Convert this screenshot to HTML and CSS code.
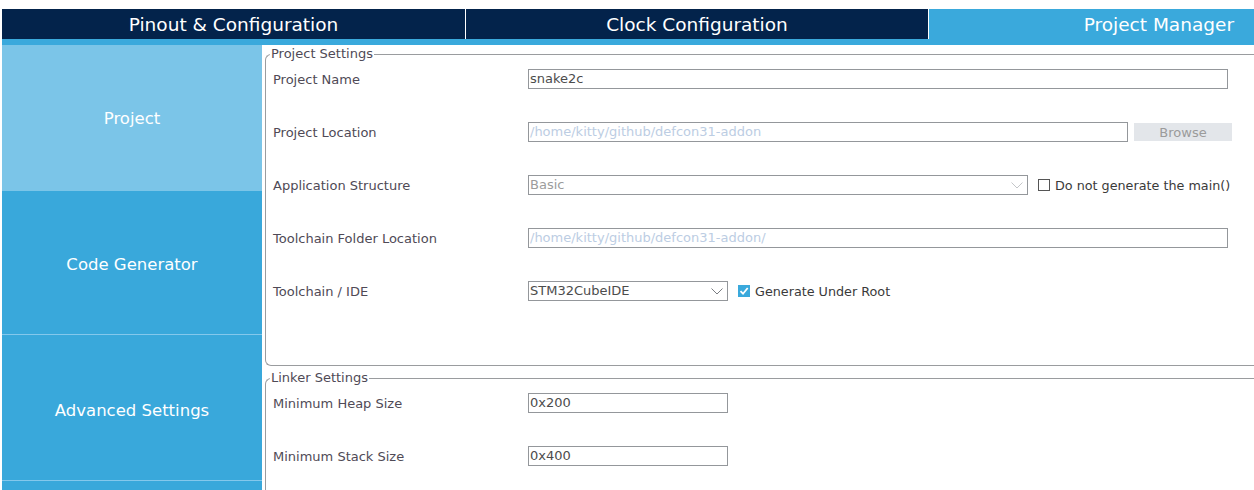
FILE: index.html
```html
<!DOCTYPE html>
<html>
<head>
<meta charset="utf-8">
<title>Project Manager</title>
<link rel="stylesheet" href="styles.css">
</head>
<body>
<div class="app">
  <nav class="tabs">
    <div class="tab tab-pinout">Pinout &amp; Configuration</div>
    <div class="tab tab-clock">Clock Configuration</div>
    <div class="tab tab-pm">Project Manager</div>
  </nav>
  <div class="tab-strip"></div>
  <div class="main">
    <aside class="side">
      <div class="side-item side-project">Project</div>
      <div class="side-item side-code">Code Generator</div>
      <div class="side-item side-adv">Advanced Settings</div>
      <div class="side-item side-more"></div>
    </aside>
    <section class="content">
      <fieldset class="group group-project">
        <legend>Project Settings</legend>
        <div class="rows">
          <div class="row">
            <span class="lbl">Project Name</span>
            <div class="ctl w700">snake2c</div>
          </div>
          <div class="row">
            <span class="lbl">Project Location</span>
            <div class="ctl w600 disabled-path">/home/kitty/github/defcon31-addon</div>
            <div class="btn">Browse</div>
          </div>
          <div class="row">
            <span class="lbl">Application Structure</span>
            <div class="ctl w500 select disabled">
              <span class="sel-text">Basic</span>
              <svg class="chev" width="12" height="7" viewBox="0 0 12 7"><polyline points="0.5,0.5 6,6 11.5,0.5" fill="none" stroke="#c4c6c9" stroke-width="1"/></svg>
            </div>
            <span class="check"></span>
            <span class="check-lbl">Do not generate the main()</span>
          </div>
          <div class="row">
            <span class="lbl">Toolchain Folder Location</span>
            <div class="ctl w700 disabled-path">/home/kitty/github/defcon31-addon/</div>
          </div>
          <div class="row">
            <span class="lbl">Toolchain / IDE</span>
            <div class="ctl w200 select">
              <span class="sel-text">STM32CubeIDE</span>
              <svg class="chev" width="12" height="7" viewBox="0 0 12 7"><polyline points="0.5,0.5 6,6 11.5,0.5" fill="none" stroke="#7a7d82" stroke-width="1"/></svg>
            </div>
            <span class="check checked"><svg width="12" height="12" viewBox="0 0 12 12"><polyline points="2.5,6.2 5,8.7 9.7,3" fill="none" stroke="#ffffff" stroke-width="1.8"/></svg></span>
            <span class="check-lbl">Generate Under Root</span>
          </div>
        </div>
      </fieldset>
      <fieldset class="group group-linker">
        <legend>Linker Settings</legend>
        <div class="rows">
          <div class="row">
            <span class="lbl">Minimum Heap Size</span>
            <div class="ctl w200">0x200</div>
          </div>
          <div class="row">
            <span class="lbl">Minimum Stack Size</span>
            <div class="ctl w200">0x400</div>
          </div>
        </div>
      </fieldset>
    </section>
  </div>
</div>
</body>
</html>
```

FILE: styles.css
```css
html, body {
  margin: 0;
  padding: 0;
  background: #ffffff;
  overflow: hidden;
}

body {
  font-family: "DejaVu Sans", "Liberation Sans", sans-serif;
  width: 1254px;
  height: 490px;
}

.app {
  padding-top: 9px;
  padding-left: 2px;
}

/* top tabs */
.tabs {
  display: flex;
  height: 30px;
  background: #03234b;
}

.tab {
  display: flex;
  align-items: center;
  justify-content: center;
  color: #ffffff;
  font-size: 18.5px;
  height: 30px;
  box-sizing: border-box;
}

.tab-pinout {
  width: 463px;
}

.tab-clock {
  width: 463px;
  border-left: 1px solid #ffffff;
}

.tab-pm {
  flex: 1;
  border-left: 1px solid #ffffff;
  background: #3aa9dc;
  justify-content: flex-end;
  padding-right: 20px;
}

.tab-strip {
  height: 6px;
  background: #3aa9dc;
}

/* main */
.main {
  display: flex;
  align-items: flex-start;
}

.side {
  width: 260px;
  flex: none;
  display: flex;
  flex-direction: column;
  background: #39a8db;
}

.side-item {
  display: flex;
  align-items: center;
  justify-content: center;
  color: #ffffff;
  font-size: 16.5px;
  box-sizing: border-box;
}

.side-project {
  height: 146px;
  background: #7bc5e8;
}

.side-code {
  height: 144px;
  padding-top: 4px;
  border-bottom: 1px solid #84c8ec;
}

.side-adv {
  height: 146px;
  padding-top: 6px;
  border-bottom: 1px solid #84c8ec;
}

.side-more {
  height: 40px;
}

.content {
  flex: 1;
  min-width: 0;
  padding-left: 3px;
  display: flex;
  flex-direction: column;
}

.group {
  margin: 0;
  border: 1px solid #9a9c9f;
  border-right: none;
  border-radius: 6px 0 0 6px;
  padding: 7px 0 64px 7px;
  min-width: 0;
}

.group legend {
  font-size: 13px;
  line-height: 16px;
  color: #4f4a56;
  padding: 0 1px;
  margin-left: -3px;
}

.group-project {
  margin-top: 1px;
}

.group-linker {
  margin-top: 4px;
  padding-top: 7px;
  padding-bottom: 40px;
}

.rows {
  display: flex;
  flex-direction: column;
  gap: 33px;
}

.row {
  display: flex;
  align-items: center;
  height: 20px;
}

.lbl {
  width: 255px;
  flex: none;
  font-size: 13px;
  color: #4f4a56;
}

.ctl {
  height: 20px;
  box-sizing: border-box;
  border: 1px solid #94979b;
  font-size: 13px;
  line-height: 18px;
  color: #4c4c4c;
  padding-left: 1px;
  white-space: nowrap;
  overflow: hidden;
  flex: none;
}

.w700 { width: 700px; }
.w600 { width: 600px; }
.w500 { width: 500px; }
.w200 { width: 200px; }

.disabled-path {
  color: #bccde3;
}

.select {
  display: flex;
  align-items: center;
  justify-content: space-between;
  padding-right: 4px;
}

.select.disabled .sel-text {
  color: #9c9c9c;
}

.chev {
  flex: none;
  margin-top: 1px;
}

.btn {
  margin-left: 6px;
  width: 98px;
  height: 18px;
  background: #e3e6ea;
  color: #9b9b9b;
  font-size: 13px;
  display: flex;
  align-items: center;
  justify-content: center;
}

.check {
  margin-left: 10px;
  width: 12px;
  height: 12px;
  box-sizing: border-box;
  border: 1px solid #555555;
  background: #ffffff;
  flex: none;
  display: flex;
}

.check.checked {
  border: none;
  background: #3aa9dc;
}

.check-lbl {
  margin-left: 5px;
  font-size: 12.75px;
  color: #3a3a3a;
  white-space: nowrap;
}
```
